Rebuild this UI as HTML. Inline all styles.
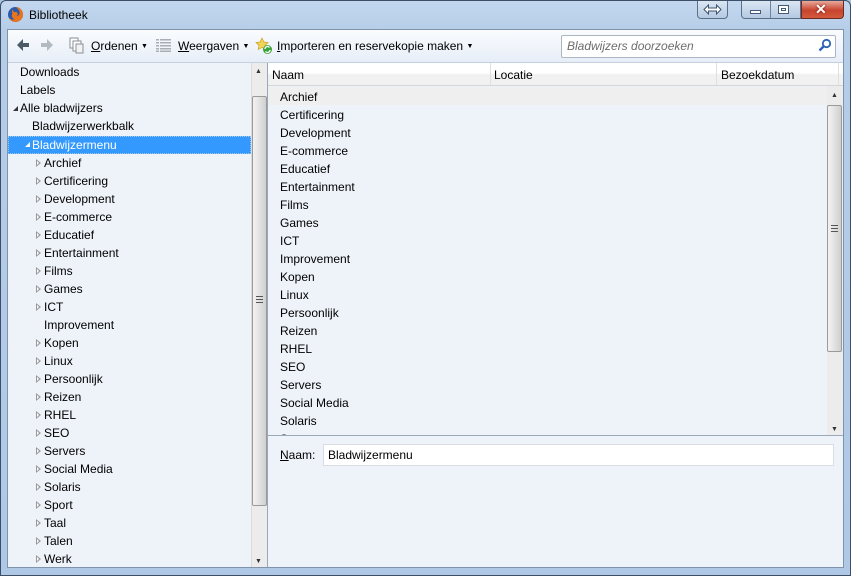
<!DOCTYPE html>
<html><head><meta charset="utf-8"><style>
*{margin:0;padding:0;box-sizing:border-box}
body{width:851px;height:576px;overflow:hidden;position:relative;font-family:"Liberation Sans",sans-serif;font-size:12px;color:#000;background:#a9c4e2}
.a{position:absolute}
.frame{left:0;top:0;width:851px;height:576px;background:linear-gradient(180deg,#c3d8ef 0,#b6cde8 30px,#aec8e6 100%);border:1px solid #3c4f66;border-radius:6px 6px 0 0}
.t{position:absolute;white-space:nowrap;line-height:18px}
.row{position:absolute;height:18px;line-height:18px;white-space:nowrap}
.tri{position:absolute;width:0;height:0;border-top:4px solid transparent;border-bottom:4px solid transparent;border-left:5px solid #9a9a9a;top:5px}
.tri:after{content:"";position:absolute;left:-4px;top:-2px;border-top:2px solid transparent;border-bottom:2px solid transparent;border-left:2px solid #fff}
.open{position:absolute;width:0;height:0;border-left:5px solid transparent;border-bottom:5px solid #333;top:7px}
.sb{background:#ececec}
.thumb{border:1px solid #9a9a9a;border-radius:2px;background:linear-gradient(90deg,#f2f2f2,#e2e2e2 50%,#cfcfcf)}
.grip{position:absolute;left:4px;width:7px;height:1px;background:#555}
</style></head><body>
<div class="a frame"></div>
<svg class="a" style="left:7px;top:6px" width="17" height="17" viewBox="0 0 17 17"><circle cx="8.5" cy="8.5" r="7.5" fill="#2d5aa8"/><path d="M8.5 1a7.5 7.5 0 1 1-7 10c1 2 4 3 6 2.5C5 12 4 9.5 5.5 7.5 4.5 6 5 4 6.5 3 5 5 7 6 8.5 6c2.5 0 3 3 1 4 3 0 4-3 2.5-5.5C11 2.5 9.5 1.5 8.5 1z" fill="#e8741e"/></svg>
<div class="t" style="left:29px;top:6px;font-size:12px">Bibliotheek</div>
<div class="a" style="left:697px;top:1px;width:31px;height:18px;border:1px solid #5a6f8a;border-top:none;border-radius:0 0 4px 4px;background:linear-gradient(#dbe6f3,#b4c9e2)"></div>
<svg class="a" style="left:703px;top:4px" width="19" height="11" viewBox="0 0 19 11"><path d="M1 5.5L5.5 1v3h8V1L18 5.5 13.5 10V7h-8v3z" fill="#fff" stroke="#3d526e" stroke-width="1"/></svg>
<div class="a" style="left:741px;top:1px;width:60px;height:18px;border:1px solid #5a6f8a;border-top:none;border-radius:0 0 0 4px;background:linear-gradient(#dbe6f3,#b4c9e2)"></div>
<div class="a" style="left:770px;top:1px;width:1px;height:17px;background:#6f84a0"></div>
<div class="a" style="left:750px;top:10px;width:11px;height:4px;background:#fff;border:1px solid #435a79"></div>
<div class="a" style="left:778px;top:5px;width:11px;height:9px;background:#fff;border:1px solid #435a79"></div>
<div class="a" style="left:781px;top:8px;width:5px;height:3px;border:1px solid #435a79"></div>
<div class="a" style="left:801px;top:1px;width:43px;height:18px;border:1px solid #6b2a22;border-top:none;border-radius:0 0 4px 0;background:linear-gradient(#e9a99b,#c7442f 55%,#d35a3c)"></div>
<div class="t" style="left:815px;top:0px;font-size:14px;font-weight:bold;color:#fff;text-shadow:0 0 2px #600">✕</div>
<div class="a" style="left:7px;top:29px;width:837px;height:539px;border:1px solid #7f93ad;background:#eef3fa"></div>
<div class="a" style="left:8px;top:30px;width:835px;height:32px;background:linear-gradient(#fafcfe,#e7eef8)"></div>
<div class="a" style="left:8px;top:62px;width:835px;height:1px;background:#c5d0de"></div>
<svg class="a" style="left:16px;top:38px" width="14" height="14" viewBox="0 0 14 14"><path d="M1 7l6-6v4h6v4H7v4z" fill="#4d5a68"/></svg>
<svg class="a" style="left:40px;top:38px" width="14" height="14" viewBox="0 0 14 14"><path d="M13 7l-6-6v4H1v4h6v4z" fill="#b3bac2"/></svg>
<svg class="a" style="left:69px;top:37px" width="16" height="17" viewBox="0 0 16 17"><rect x="1" y="1" width="8" height="10" fill="#fff" stroke="#8a8f96"/><rect x="4" y="4" width="8" height="10" fill="#fff" stroke="#8a8f96"/><rect x="7" y="7" width="7" height="9" fill="#f2f2f2" stroke="#8a8f96"/></svg>
<div class="t" style="left:91px;top:37px"><u>O</u>rdenen <span style="font-size:7px;vertical-align:2px">▼</span></div>
<svg class="a" style="left:156px;top:39px" width="15" height="13" viewBox="0 0 15 13"><g fill="#a9aeb5"><rect x="0" y="0" width="3" height="1.5"/><rect x="4" y="0" width="11" height="1.5"/><rect x="0" y="3" width="3" height="1.5"/><rect x="4" y="3" width="11" height="1.5"/><rect x="0" y="6" width="3" height="1.5"/><rect x="4" y="6" width="11" height="1.5"/><rect x="0" y="9" width="3" height="1.5"/><rect x="4" y="9" width="11" height="1.5"/><rect x="0" y="11.5" width="3" height="1.5"/><rect x="4" y="11.5" width="11" height="1.5"/></g></svg>
<div class="t" style="left:178px;top:37px"><u>W</u>eergaven <span style="font-size:7px;vertical-align:2px">▼</span></div>
<svg class="a" style="left:255px;top:37px" width="18" height="18" viewBox="0 0 18 18"><path d="M7 1l2 4 4 .5-3 3 .8 4L7 10.5 3.2 12.5 4 8.5 1 5.5l4-.5z" fill="#f3d556" stroke="#c9a227" stroke-width=".7"/><circle cx="12.5" cy="12.5" r="4.5" fill="#3aa33a"/><path d="M10 12a2.5 2.5 0 0 1 4.5-1.5M15 13a2.5 2.5 0 0 1-4.5 1.5" stroke="#fff" stroke-width="1.3" fill="none"/></svg>
<div class="t" style="left:277px;top:37px"><u>I</u>mporteren en reservekopie maken <span style="font-size:7px;vertical-align:2px">▼</span></div>
<div class="a" style="left:561px;top:35px;width:275px;height:23px;background:#fff;border:1px solid #abb6c3;border-radius:2px"></div>
<div class="t" style="left:567px;top:37px;color:#6d6d6d;font-style:italic">Bladwijzers doorzoeken</div>
<svg class="a" style="left:818px;top:38px" width="14" height="14" viewBox="0 0 14 14"><circle cx="8.5" cy="5.5" r="3.7" fill="none" stroke="#2a63b5" stroke-width="1.8"/><path d="M6 8l-4.5 4.5" stroke="#2a63b5" stroke-width="2.4"/></svg>
<div class="a" style="left:8px;top:63px;width:243px;height:504px;background:#eef3fa"></div>
<div class="a" style="left:8px;top:136px;width:243px;height:18px;background:#3399ff;border:1px dotted #a0c8f0"></div>
<div class="row" style="left:20px;top:63px">Downloads</div>
<div class="row" style="left:20px;top:81px">Labels</div>
<div class="open" style="left:13px;top:106px"></div><div class="row" style="left:20px;top:99px">Alle bladwijzers</div>
<div class="row" style="left:32px;top:117px">Bladwijzerwerkbalk</div>
<div class="open" style="left:25px;top:142px;border-bottom-color:#fff"></div><div class="row" style="left:32px;top:136px;color:#fff">Bladwijzermenu</div>
<div id="tree"></div>
<div class="a sb" style="left:251px;top:63px;width:17px;height:504px;border-left:1px solid #dadada"></div>
<div class="t" style="left:255px;top:63px;font-size:7px;color:#333">▲</div>
<div class="t" style="left:255px;top:553px;font-size:7px;color:#333">▼</div>
<div class="a thumb" style="left:252px;top:96px;width:15px;height:410px"></div>
<div class="grip" style="left:256px;top:296px"></div><div class="grip" style="left:256px;top:299px"></div><div class="grip" style="left:256px;top:302px"></div>
<div class="a" style="left:267px;top:63px;width:1px;height:504px;background:#9aa8b9"></div>
<div class="a" style="left:268px;top:63px;width:575px;height:23px;background:linear-gradient(#fff 0,#fff 45%,#f1f1f1 50%,#f1f1f1)"></div>
<div class="a" style="left:268px;top:85px;width:575px;height:1px;background:#d5d5d5"></div>
<div class="a" style="left:490px;top:63px;width:1px;height:22px;background:#e0e0e0"></div>
<div class="a" style="left:716px;top:63px;width:1px;height:22px;background:#e0e0e0"></div>
<div class="a" style="left:838px;top:63px;width:1px;height:22px;background:#e0e0e0"></div>
<div class="t" style="left:272px;top:66px">Naam</div>
<div class="t" style="left:494px;top:66px">Locatie</div>
<div class="t" style="left:721px;top:66px">Bezoekdatum</div>
<div class="a" style="left:268px;top:86px;width:575px;height:350px;background:#eef3fa;overflow:hidden" id="list"><div class="a" style="left:0;top:1px;width:559px;height:18px;background:#efefef"></div></div>
<div class="a sb" style="left:827px;top:86px;width:16px;height:350px"></div>
<div class="t" style="left:831px;top:87px;font-size:7px;color:#333">▲</div>
<div class="t" style="left:831px;top:421px;font-size:7px;color:#333">▼</div>
<div class="a thumb" style="left:827px;top:105px;width:15px;height:247px"></div>
<div class="grip" style="left:831px;top:225px"></div><div class="grip" style="left:831px;top:228px"></div><div class="grip" style="left:831px;top:231px"></div>
<div class="a" style="left:268px;top:435px;width:575px;height:1px;background:#9aa8b9"></div>
<div class="t" style="left:280px;top:446px"><u>N</u>aam:</div>
<div class="a" style="left:323px;top:444px;width:511px;height:22px;background:#fff;border:1px solid #d8dde4"></div>
<div class="t" style="left:328px;top:446px">Bladwijzermenu</div>
<script>
var items=["Archief","Certificering","Development","E-commerce","Educatief","Entertainment","Films","Games","ICT","Improvement","Kopen","Linux","Persoonlijk","Reizen","RHEL","SEO","Servers","Social Media","Solaris","Sport","Taal","Talen","Werk"];
var h="";items.forEach(function(s,i){var y=154+i*18;if(s!="Improvement")h+='<div class="tri" style="left:36px;top:'+(y+5)+'px"></div>';h+='<div class="row" style="left:44px;top:'+y+'px">'+s+'</div>';});
document.getElementById("tree").innerHTML=h;
var l="";items.forEach(function(s,i){l+='<div class="row" style="left:12px;top:'+(2+i*18)+'px">'+s+'</div>';});
document.getElementById("list").innerHTML+=l;
</script>
</body></html>
